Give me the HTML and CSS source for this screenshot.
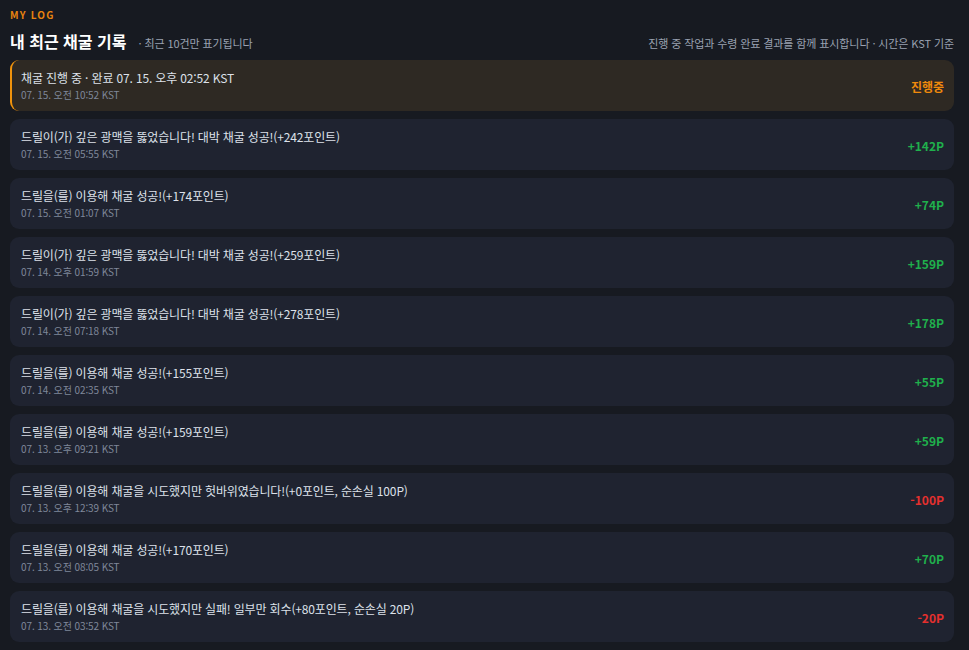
FILE: index.html
```html
<!DOCTYPE html>
<html lang="ko">
<head>
<meta charset="utf-8">
<link rel="stylesheet" href="styles.css">
</head>
<body>
<div class="page">
  <div class="eyebrow">MY LOG</div>
  <div class="head">
    <div class="head-left">
      <h1 class="title">내 최근 채굴 기록</h1>
      <span class="sub">· 최근 10건만 표기됩니다</span>
    </div>
    <div class="head-right">진행 중 작업과 수령 완료 결과를 함께 표시합니다 · 시간은 KST 기준</div>
  </div>
  <ul class="list">
    <li class="card active">
      <div class="info"><div class="msg">채굴 진행 중 · 완료 07. 15. 오후 02:52 KST</div><div class="date">07. 15. 오전 10:52 KST</div></div>
      <div class="amt pending">진행중</div>
    </li>
    <li class="card">
      <div class="info"><div class="msg">드릴이(가) 깊은 광맥을 뚫었습니다! 대박 채굴 성공!(+242포인트)</div><div class="date">07. 15. 오전 05:55 KST</div></div>
      <div class="amt plus">+142P</div>
    </li>
    <li class="card">
      <div class="info"><div class="msg">드릴을(를) 이용해 채굴 성공!(+174포인트)</div><div class="date">07. 15. 오전 01:07 KST</div></div>
      <div class="amt plus">+74P</div>
    </li>
    <li class="card">
      <div class="info"><div class="msg">드릴이(가) 깊은 광맥을 뚫었습니다! 대박 채굴 성공!(+259포인트)</div><div class="date">07. 14. 오후 01:59 KST</div></div>
      <div class="amt plus">+159P</div>
    </li>
    <li class="card">
      <div class="info"><div class="msg">드릴이(가) 깊은 광맥을 뚫었습니다! 대박 채굴 성공!(+278포인트)</div><div class="date">07. 14. 오전 07:18 KST</div></div>
      <div class="amt plus">+178P</div>
    </li>
    <li class="card">
      <div class="info"><div class="msg">드릴을(를) 이용해 채굴 성공!(+155포인트)</div><div class="date">07. 14. 오전 02:35 KST</div></div>
      <div class="amt plus">+55P</div>
    </li>
    <li class="card">
      <div class="info"><div class="msg">드릴을(를) 이용해 채굴 성공!(+159포인트)</div><div class="date">07. 13. 오후 09:21 KST</div></div>
      <div class="amt plus">+59P</div>
    </li>
    <li class="card">
      <div class="info"><div class="msg">드릴을(를) 이용해 채굴을 시도했지만 헛바위였습니다!(+0포인트, 순손실 100P)</div><div class="date">07. 13. 오후 12:39 KST</div></div>
      <div class="amt minus">-100P</div>
    </li>
    <li class="card">
      <div class="info"><div class="msg">드릴을(를) 이용해 채굴 성공!(+170포인트)</div><div class="date">07. 13. 오전 08:05 KST</div></div>
      <div class="amt plus">+70P</div>
    </li>
    <li class="card">
      <div class="info"><div class="msg">드릴을(를) 이용해 채굴을 시도했지만 실패! 일부만 회수(+80포인트, 순손실 20P)</div><div class="date">07. 13. 오전 03:52 KST</div></div>
      <div class="amt minus">-20P</div>
    </li>
  </ul>
</div>
</body>
</html>
```
FILE: styles.css
```css
* { box-sizing: border-box; }
html, body { margin: 0; padding: 0; }
body {
  background: #171a21;
  font-family: "Noto Sans CJK KR", "Noto Sans", sans-serif;
  color: #e6e9ef;
  height: 650px;
  overflow: hidden;
}
.page {
  padding: 9px 15px 0 10px;
}
.eyebrow {
  color: #e8830f;
  font-size: 10px;
  font-weight: 700;
  letter-spacing: 1.2px;
  line-height: 12px;
}
.head {
  display: flex;
  justify-content: space-between;
  align-items: flex-end;
  margin-top: 5px;
  height: 26px;
}
.head-left {
  display: flex;
  align-items: baseline;
  gap: 12px;
}
.title {
  margin: 0;
  font-size: 16px;
  font-weight: 700;
  color: #ffffff;
  line-height: 22px;
}
.sub {
  font-size: 11px;
  color: #9aa2b1;
  letter-spacing: -0.1px;
}
.head-right {
  font-size: 11px;
  color: #9aa2b1;
  line-height: 18px;
  letter-spacing: -0.1px;
}
.list {
  list-style: none;
  margin: 8px 0 0;
  padding: 0;
  display: flex;
  flex-direction: column;
  gap: 8px;
}
.card {
  height: 51px;
  background: #1f2330;
  border-radius: 9px;
  display: flex;
  align-items: center;
  justify-content: space-between;
  padding: 0 10px 0 11px;
}
.card.active {
  background: #2e2923;
  border-left: 2px solid #f0930c;
  padding-left: 9px;
}
.info {
  display: flex;
  flex-direction: column;
  gap: 2px;
}
.msg {
  font-size: 12px;
  line-height: 17px;
  color: #dde1ea;
  letter-spacing: -0.15px;
}
.date {
  font-size: 10px;
  line-height: 14px;
  color: #7f889a;
  letter-spacing: -0.1px;
}
.amt {
  font-size: 12px;
  font-weight: 700;
  padding-top: 2px;
}
.plus { color: #1fb04c; }
.minus { color: #e5302e; }
.pending { color: #f08a0c; }
```
